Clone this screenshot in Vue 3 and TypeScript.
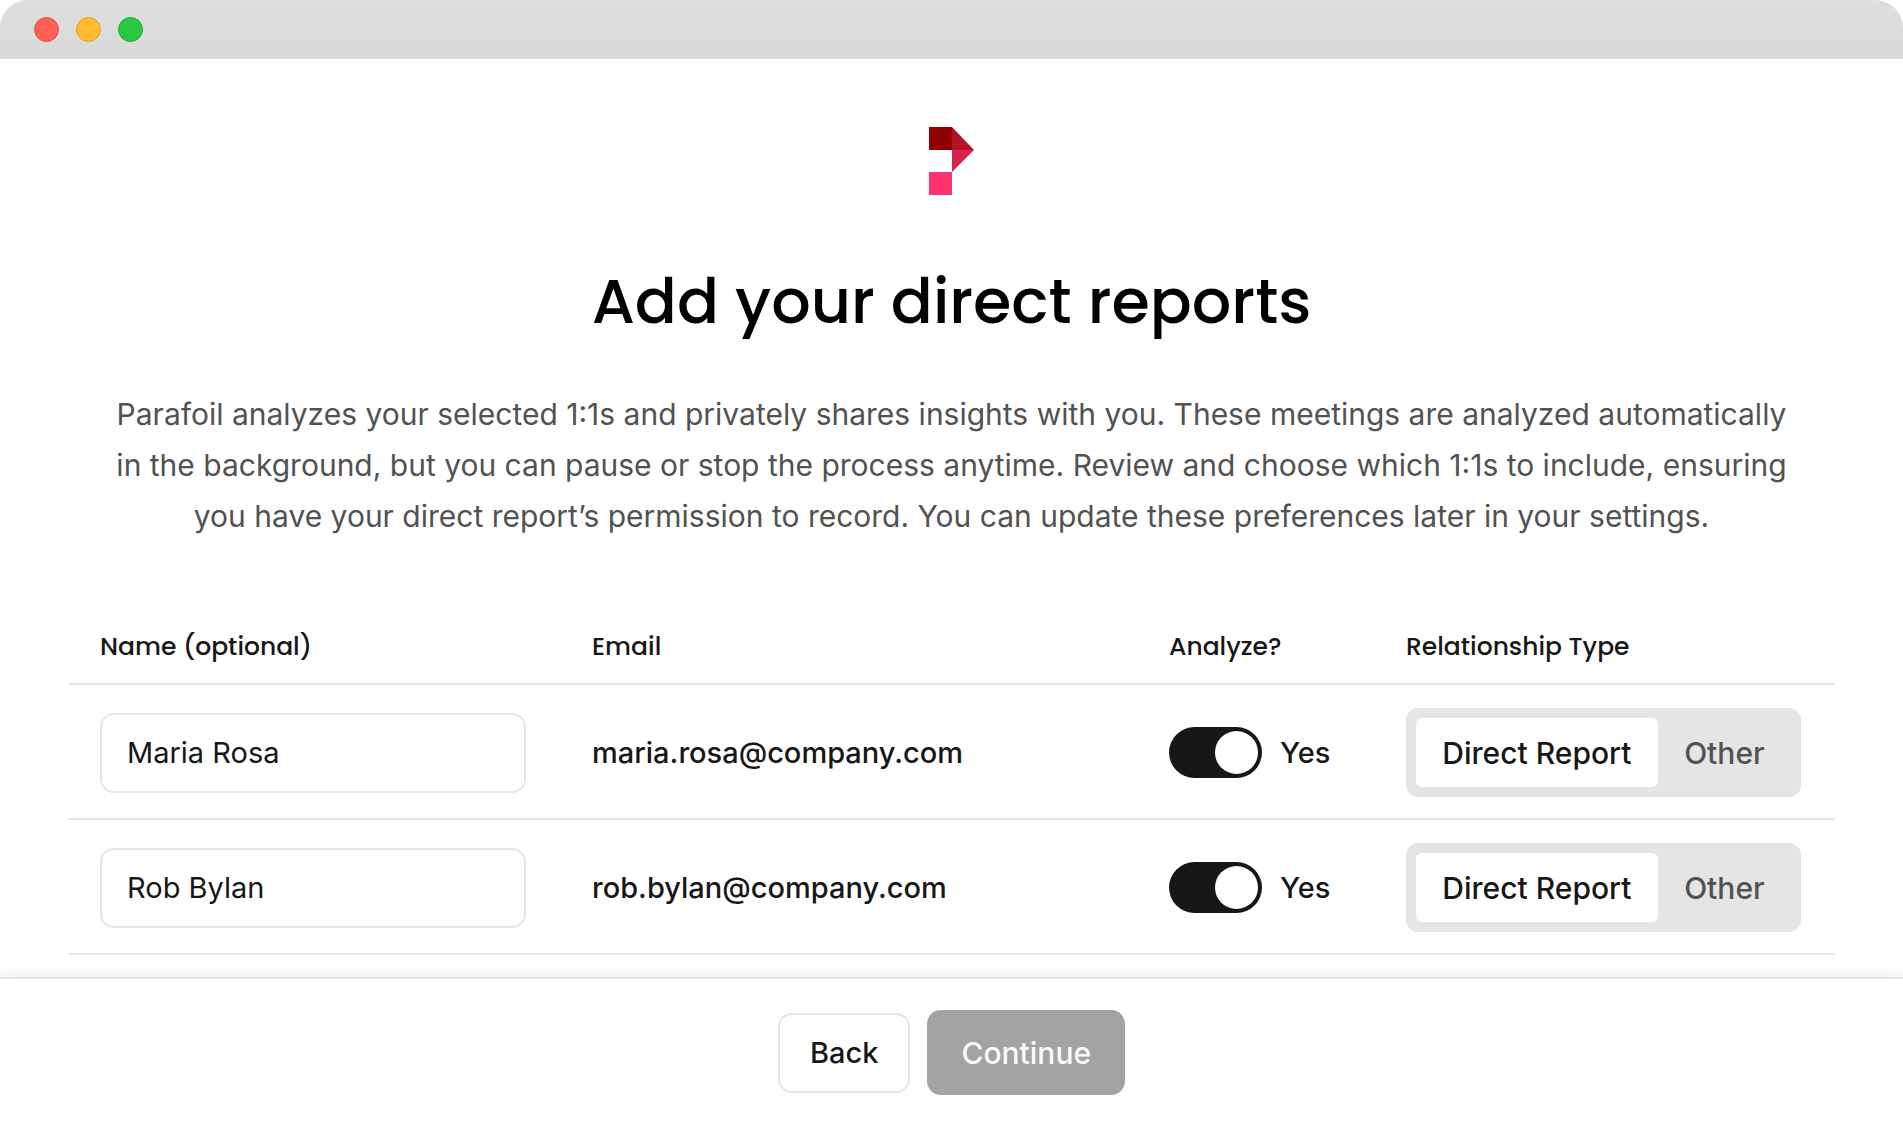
<script setup lang="ts">
import { reactive } from 'vue'

type Relationship = 'direct' | 'other'

interface Report {
  id: number
  name: string
  email: string
  analyze: boolean
  relationship: Relationship
}

const relationships: { value: Relationship; label: string }[] = [
  { value: 'direct', label: 'Direct Report' },
  { value: 'other', label: 'Other' },
]

const reports = reactive<Report[]>([
  { id: 1, name: 'Maria Rosa', email: 'maria.rosa@company.com', analyze: true, relationship: 'direct' },
  { id: 2, name: 'Rob Bylan', email: 'rob.bylan@company.com', analyze: true, relationship: 'direct' },
])
</script>

<template>
  <div class="window">
    <header class="titlebar">
      <span class="dot dot-close"></span>
      <span class="dot dot-minimize"></span>
      <span class="dot dot-zoom"></span>
    </header>

    <main class="content">
      <svg class="logo" viewBox="0 0 45 68" width="45" height="68" aria-hidden="true">
        <rect x="0" y="0" width="23" height="23" fill="#8f0000" />
        <path d="M23 0 L45 23 H23 Z" fill="#b51224" />
        <path d="M23 23 H45 L23 45 Z" fill="#d9234b" />
        <rect x="0" y="45" width="23" height="23" fill="#ff336f" />
      </svg>

      <h1 class="title">Add your direct reports</h1>
      <p class="intro">
        Parafoil analyzes your selected 1:1s and privately shares insights with you. These meetings are analyzed
        automatically in the background, but you can pause or stop the process anytime. Review and choose which 1:1s to
        include, ensuring you have your direct report’s permission to record. You can update these preferences later in
        your settings.
      </p>

      <table class="reports">
        <colgroup>
          <col class="col-name" />
          <col class="col-email" />
          <col class="col-analyze" />
          <col class="col-type" />
        </colgroup>
        <thead>
          <tr>
            <th scope="col">Name (optional)</th>
            <th scope="col">Email</th>
            <th scope="col">Analyze?</th>
            <th scope="col">Relationship Type</th>
          </tr>
        </thead>
        <tbody>
          <tr v-for="report in reports" :key="report.id">
            <td>
              <input v-model="report.name" class="name-input" type="text" :aria-label="`Name for ${report.email}`" />
            </td>
            <td class="email">{{ report.email }}</td>
            <td>
              <label class="switch">
                <input v-model="report.analyze" class="switch-input" type="checkbox" role="switch" />
                <span>{{ report.analyze ? 'Yes' : 'No' }}</span>
              </label>
            </td>
            <td>
              <div class="segmented" role="group" aria-label="Relationship type">
                <button
                  v-for="option in relationships"
                  :key="option.value"
                  type="button"
                  class="segment"
                  :class="{ active: report.relationship === option.value }"
                  :aria-pressed="report.relationship === option.value"
                  @click="report.relationship = option.value"
                >
                  {{ option.label }}
                </button>
              </div>
            </td>
          </tr>
        </tbody>
      </table>
    </main>

    <footer class="actions">
      <button type="button" class="btn btn-back">Back</button>
      <button type="button" class="btn btn-continue" disabled>Continue</button>
    </footer>
  </div>
</template>

<style>
body {
  background: #fff;
}
</style>

<style scoped>
.window {
  box-sizing: border-box;
  min-height: 100vh;
  display: flex;
  flex-direction: column;
  background: #fff;
  color: #171717;
  font-family: Inter, 'Liberation Sans', sans-serif;
  font-size: 29px;
  line-height: 40px;
}

.window *,
.window *::before {
  box-sizing: border-box;
}

.titlebar {
  display: flex;
  align-items: center;
  gap: 17px;
  height: 59px;
  padding: 0 34px;
  border-radius: 28px 28px 0 0;
  background: linear-gradient(#dedede, #dadada);
}

.dot {
  width: 25px;
  height: 25px;
  border: 1px solid;
  border-radius: 50%;
}

.dot-close {
  background: #ff5f57;
  border-color: #e2504a;
}

.dot-minimize {
  background: #febc2e;
  border-color: #dfa023;
}

.dot-zoom {
  background: #28c840;
  border-color: #1fae34;
}

.content {
  flex: 1;
  padding: 68px 68px 22px;
  display: flex;
  flex-direction: column;
  align-items: center;
}

.title {
  margin: 61px 0 0;
  font-family: Poppins, Inter, sans-serif;
  font-size: 62px;
  font-weight: 500;
  line-height: 92px;
  color: #000;
}

.intro {
  margin: 41px 0 0;
  max-width: 1680px;
  font-size: 30px;
  line-height: 51px;
  text-align: center;
  color: #525252;
}

.reports {
  width: 100%;
  margin-top: 68px;
  table-layout: fixed;
  border-collapse: separate;
  border-spacing: 0;
}

.col-name {
  width: 492px;
}

.col-analyze {
  width: 237px;
}

.col-type {
  width: 461px;
}

th,
td {
  padding: 0 34px 0 32px;
  border-bottom: 2px solid #e5e5e5;
  text-align: left;
  vertical-align: middle;
}

th {
  height: 75px;
  font-family: Poppins, Inter, sans-serif;
  font-size: 25px;
  font-weight: 500;
}

td {
  height: 135px;
  padding-top: 2px;
}

.name-input {
  display: block;
  width: 100%;
  height: 80px;
  padding: 0 25px;
  border: 2px solid #e5e5e5;
  border-radius: 14px;
  background: #fff;
  color: inherit;
  font: inherit;
}

.email {
  font-weight: 500;
}

.switch {
  display: flex;
  align-items: center;
  gap: 18px;
  font-weight: 500;
}

.switch-input {
  appearance: none;
  flex: none;
  display: flex;
  width: 93px;
  height: 51px;
  margin: 0;
  padding: 4px;
  border-radius: 26px;
  background: #737373;
}

.switch-input::before {
  content: '';
  width: 43px;
  height: 43px;
  border-radius: 50%;
  background: #fff;
}

.switch-input:checked {
  justify-content: flex-end;
  background: #171717;
}

.segmented {
  display: flex;
  height: 89px;
  padding: 10px;
  border-radius: 12px;
  background: #e5e5e5;
}

.segment {
  flex: 1 0 auto;
  padding: 0 24px;
  border: 0;
  border-radius: 6px;
  background: transparent;
  color: #525252;
  font: inherit;
  font-size: 30px;
  font-weight: 500;
}

.segment.active {
  background: #fff;
  color: #171717;
}

.actions {
  display: flex;
  align-items: center;
  justify-content: center;
  gap: 17px;
  padding: 31px 32px 34px;
  border-top: 2px solid #e5e5e5;
  background: #fff;
  box-shadow: 0 0 14px rgba(0, 0, 0, 0.1);
}

.btn {
  border-radius: 14px;
  font: inherit;
  font-weight: 500;
}

.btn-back {
  height: 80px;
  padding: 0 30px;
  border: 2px solid #e5e5e5;
  background: #fff;
  color: #171717;
}

.btn-continue {
  height: 85px;
  padding: 0 34px;
  border: 0;
  background: #a3a3a3;
  color: #fafafa;
  font-size: 30px;
}
</style>
